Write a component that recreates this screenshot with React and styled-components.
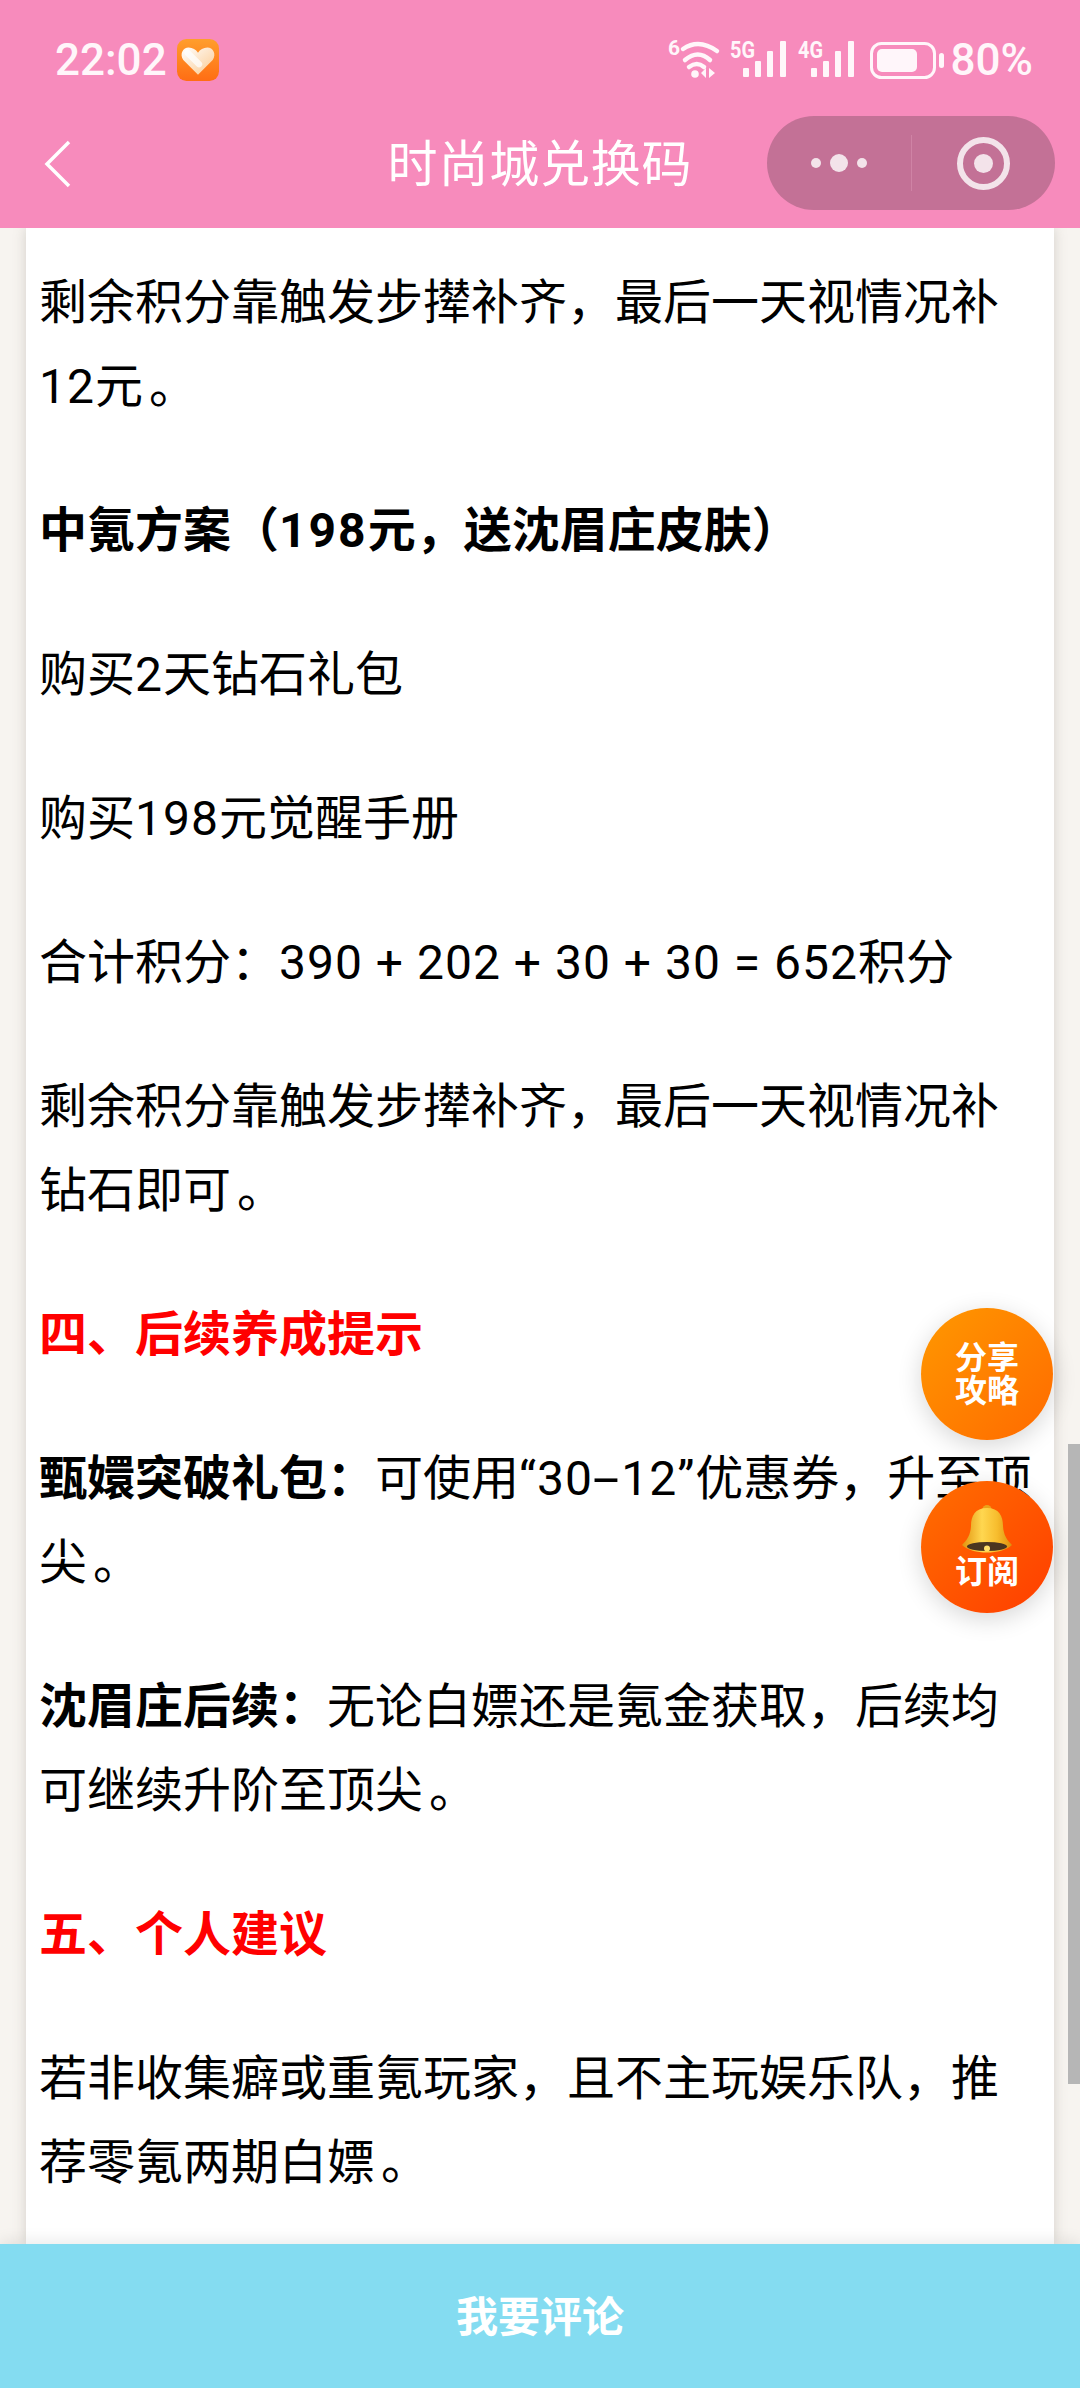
import styled, { createGlobalStyle } from 'styled-components';

const GlobalStyle = createGlobalStyle`
  html, body {
    margin: 0;
    padding: 0;
    background: #f7f4f0;
  }
`;

const FONT = `Roboto, "Noto Sans CJK SC", sans-serif`;

// 整个页面
const Page = styled.div`
  position: relative;
  width: 1080px;
  height: 2388px;
  overflow: hidden;
  display: flex;
  flex-direction: column;
  font-family: ${FONT};
  background: #f7f4f0;
`;

// 顶部粉色区域
const Header = styled.header`
  position: relative;
  flex: none;
  height: 228px;
  background: #f78bbc;
  color: #fff;
`;

const StatusBar = styled.div`
  height: 116px;
  box-sizing: border-box;
  padding: 35px 47px 0 55px;
  display: flex;
  justify-content: space-between;
  align-items: flex-start;
`;

const StatusLeft = styled.div`
  display: flex;
  align-items: center;
  gap: 10px;
`;

const Time = styled.span`
  font-size: 44px;
  font-weight: 500;
  line-height: 50px;
  color: #fff6fa;
`;

const StatusRight = styled.div`
  display: flex;
  align-items: center;
  height: 50px;
  gap: 12px;
  svg {
    display: block;
    overflow: visible;
  }
`;

const BatteryWrap = styled.div`
  margin-left: 4px;
`;

const Percent = styled.span`
  font-size: 44px;
  font-weight: 500;
  line-height: 50px;
  margin-left: -5px;
  color: #fff6fa;
`;

const NavBar = styled.div`
  height: 112px;
  box-sizing: border-box;
  padding: 0 25px 0 44px;
  display: flex;
  align-items: flex-start;
  justify-content: space-between;
`;

const BackButton = styled.div`
  width: 28px;
  height: 48px;
  margin-top: 24px;
`;

const NavTitle = styled.div`
  position: absolute;
  left: 0;
  right: 0;
  top: 130px;
  text-align: center;
  font-family: "Noto Sans CJK SC", sans-serif;
  font-size: 50px;
  line-height: 60px;
  font-weight: 400;
  letter-spacing: 0.8px;
  pointer-events: none;
`;

const Capsule = styled.div`
  width: 288px;
  height: 94px;
  border-radius: 47px;
  background: #c37196;
  display: flex;
  align-items: center;
`;

const CapsulePart = styled.div`
  flex: 1;
  height: 56px;
  display: flex;
  align-items: center;
  justify-content: center;
  gap: 9px;
  &:first-child {
    border-right: 1px solid #cf83a5;
  }
`;

const Dot = styled.span`
  width: ${(p) => p.$size}px;
  height: ${(p) => p.$size}px;
  border-radius: 50%;
  background: #f3e3ea;
`;

const Target = styled.span`
  width: 53px;
  height: 53px;
  box-sizing: border-box;
  border: 6px solid #f3e3ea;
  border-radius: 50%;
  display: flex;
  align-items: center;
  justify-content: center;
  &::after {
    content: "";
    width: 19px;
    height: 19px;
    border-radius: 50%;
    background: #f3e3ea;
  }
`;

// 正文
const Main = styled.main`
  flex: 1;
  min-height: 0;
  overflow: hidden;
  padding: 0 26px;
`;

const Article = styled.article`
  background: #fff;
  height: 100%;
  box-sizing: border-box;
  padding: 33px 14px 0 13px;
  box-shadow: 0 0 12px rgba(120, 110, 100, 0.28);
  color: #000;
  font-size: 48px;
  line-height: 84px;
`;

const Para = styled.p`
  margin: 0 0 60px;
`;

const Heading = styled.p`
  margin: 0 0 60px;
  font-weight: 700;
  color: ${(p) => (p.$red ? '#f00' : '#000')};
`;

// 数字和英文字距稍宽
const Num = styled.span`
  letter-spacing: ${(p) => p.$gap || 1}px;
`;

const Hyphen = styled.span`
  display: inline-block;
  margin: 0 7px;
  transform: scaleX(2);
`;

// 句号离前一个字远一点
const Stop = styled.span`
  margin-left: 6px;
`;

// 底部按钮
const CommentBar = styled.footer`
  position: relative;
  flex: none;
  height: 144px;
  box-sizing: border-box;
  padding-bottom: 5px;
  background: #84dcf1;
  color: #fff;
  display: flex;
  align-items: center;
  justify-content: center;
  font-family: "Noto Sans CJK SC", sans-serif;
  font-size: 42px;
  font-weight: 700;
  box-shadow: 0 -4px 14px rgba(0, 0, 0, 0.08);
`;

// 悬浮按钮
const FloatButton = styled.div`
  position: absolute;
  left: 921px;
  top: ${(p) => p.$top}px;
  width: 132px;
  height: 132px;
  box-sizing: border-box;
  padding-bottom: 4px;
  border-radius: 50%;
  background: linear-gradient(135deg, ${(p) => p.$from}, ${(p) => p.$to});
  box-shadow: 0 6px 24px rgba(0, 0, 0, 0.16);
  color: #fff;
  display: flex;
  flex-direction: column;
  align-items: center;
  justify-content: center;
  font-family: "Noto Sans CJK SC", sans-serif;
  font-size: 32px;
  font-weight: 700;
  line-height: 33px;
`;

const BellIcon = styled.svg`
  display: block;
`;

const ScrollThumb = styled.div`
  position: absolute;
  right: 0;
  top: 1444px;
  width: 12px;
  height: 640px;
  background: #b6b6b6;
`;

function HeartBadge() {
  return (
    <svg width="42" height="42" viewBox="0 0 40 40">
      <defs>
        <linearGradient id="hb" x1="0" y1="0" x2="0" y2="1">
          <stop offset="0" stopColor="#ff9e2c" />
          <stop offset="1" stopColor="#ff6d14" />
        </linearGradient>
        <linearGradient id="hh" x1="0" y1="0" x2="1" y2="1">
          <stop offset="0" stopColor="#fff" />
          <stop offset="1" stopColor="#fbc98f" />
        </linearGradient>
      </defs>
      <rect width="40" height="40" rx="9" fill="url(#hb)" />
      <path d="M20 34 L6 20 C2 14 6 8 11 8 C15 8 18 10 20 13 C22 10 25 8 29 8 C34 8 38 14 34 20 Z" fill="url(#hh)" />
      <path d="M10 13 L21 24" stroke="#fff" strokeWidth="6" strokeLinecap="round" opacity="0.75" />
    </svg>
  );
}

function WifiIcon() {
  return (
    <svg width="50" height="40" viewBox="0 0 50 40" fill="none" stroke="#fff6fa" strokeLinecap="round">
      <text x="0" y="15" fontFamily="Roboto" fontWeight="700" fontSize="21" fill="#fff6fa" stroke="none">6</text>
      <path d="M15 9 Q31 -2 49 11" strokeWidth="4.5" />
      <path d="M17 20 Q30 9 42 20" strokeWidth="4.5" />
      <path d="M21 27 Q29 21 36 27" strokeWidth="4.5" />
      <circle cx="27" cy="34" r="3.8" fill="#fff6fa" stroke="none" />
      <path d="M38 28 L38 38 L33 33 Z M41 28 L41 38 L47 33 Z" fill="#fff6fa" stroke="none" />
    </svg>
  );
}

function SignalIcon({ label }) {
  return (
    <svg width="56" height="40" viewBox="0 0 56 40" fill="#fff6fa">
      <text x="0" y="18" fontFamily="Roboto" fontWeight="700" fontSize="24" textLength="25" lengthAdjust="spacingAndGlyphs">{label}</text>
      <rect x="13" y="28" width="6" height="9" rx="1" />
      <rect x="25" y="21" width="6" height="16" rx="1" />
      <rect x="37" y="11" width="6" height="26" rx="1" />
      <rect x="50" y="1" width="6" height="36" rx="1" />
    </svg>
  );
}

function BatteryIcon() {
  return (
    <svg width="74" height="37" viewBox="0 0 74 37">
      <rect x="1.5" y="1.5" width="63" height="34" rx="10" fill="none" stroke="#fff6fa" strokeWidth="3" />
      <rect x="7" y="7" width="40" height="23" rx="5" fill="#fff6fa" />
      <rect x="69" y="11" width="5" height="15" rx="2.5" fill="#fff6fa" />
    </svg>
  );
}

function Bell() {
  return (
    <BellIcon width="50" height="48" viewBox="0 0 50 48">
      <defs>
        <linearGradient id="bell" x1="0" y1="0" x2="1" y2="0">
          <stop offset="0" stopColor="#e2940f" />
          <stop offset="0.4" stopColor="#ffd750" />
          <stop offset="0.7" stopColor="#f7bd2e" />
          <stop offset="1" stopColor="#dd8f0c" />
        </linearGradient>
      </defs>
      <circle cx="25" cy="4.5" r="4.5" fill="#eca21a" />
      <path d="M25 3 C13 3 9 11 9 21 C8.5 30 5 35 0 40 C10 50 40 50 50 40 C45 35 41.5 30 41 21 C41 11 37 3 25 3 Z" fill="url(#bell)" />
      <ellipse cx="25" cy="41.5" rx="20" ry="4.5" fill="#4a3520" />
      <circle cx="25" cy="43.5" r="3" fill="#ffdf6a" />
    </BellIcon>
  );
}

function App() {
  return (
    <Page>
      <GlobalStyle />
      <Header>
        <StatusBar>
          <StatusLeft>
            <Time>22:02</Time>
            <HeartBadge />
          </StatusLeft>
          <StatusRight>
            <WifiIcon />
            <SignalIcon label="5G" />
            <SignalIcon label="4G" />
            <BatteryWrap>
              <BatteryIcon />
            </BatteryWrap>
            <Percent>80%</Percent>
          </StatusRight>
        </StatusBar>
        <NavBar>
          <BackButton>
            <svg width="28" height="48" viewBox="0 0 28 48" fill="none" stroke="#fff" strokeWidth="3.5">
              <path d="M25 2 L3 24 L25 46" />
            </svg>
          </BackButton>
          <NavTitle>时尚城兑换码</NavTitle>
          <Capsule>
            <CapsulePart>
              <Dot $size={10} />
              <Dot $size={18} />
              <Dot $size={10} />
            </CapsulePart>
            <CapsulePart>
              <Target />
            </CapsulePart>
          </Capsule>
        </NavBar>
      </Header>
      <Main>
        <Article>
          <Para>剩余积分靠触发步撵补齐，最后一天视情况补<Num>12</Num>元<Stop>。</Stop></Para>
          <Heading>中氪方案（<Num $gap={2}>198</Num>元，送沈眉庄皮肤）</Heading>
          <Para>购买<Num>2</Num>天钻石礼包</Para>
          <Para>购买<Num>198</Num>元觉醒手册</Para>
          <Para>合计积分：<Num>390 + 202 + 30 + 30 = 652</Num>积分</Para>
          <Para>剩余积分靠触发步撵补齐，最后一天视情况补钻石即可<Stop>。</Stop></Para>
          <Heading $red>四、后续养成提示</Heading>
          <Para><b>甄嬛突破礼包：</b>可使用<Num>“30<Hyphen>-</Hyphen>12”</Num>优惠券，升至顶尖<Stop>。</Stop></Para>
          <Para><b>沈眉庄后续：</b>无论白嫖还是氪金获取，后续均可继续升阶至顶尖<Stop>。</Stop></Para>
          <Heading $red>五、个人建议</Heading>
          <Para>若非收集癖或重氪玩家，且不主玩娱乐队，推荐零氪两期白嫖<Stop>。</Stop></Para>
        </Article>
      </Main>
      <CommentBar>我要评论</CommentBar>
      <FloatButton $top={1308} $from="#ff9800" $to="#ff6a00">
        <span>分享</span>
        <span>攻略</span>
      </FloatButton>
      <FloatButton $top={1481} $from="#ff6f00" $to="#ff3d00">
        <Bell />
        <span>订阅</span>
      </FloatButton>
      <ScrollThumb />
    </Page>
  );
}

export default App;
